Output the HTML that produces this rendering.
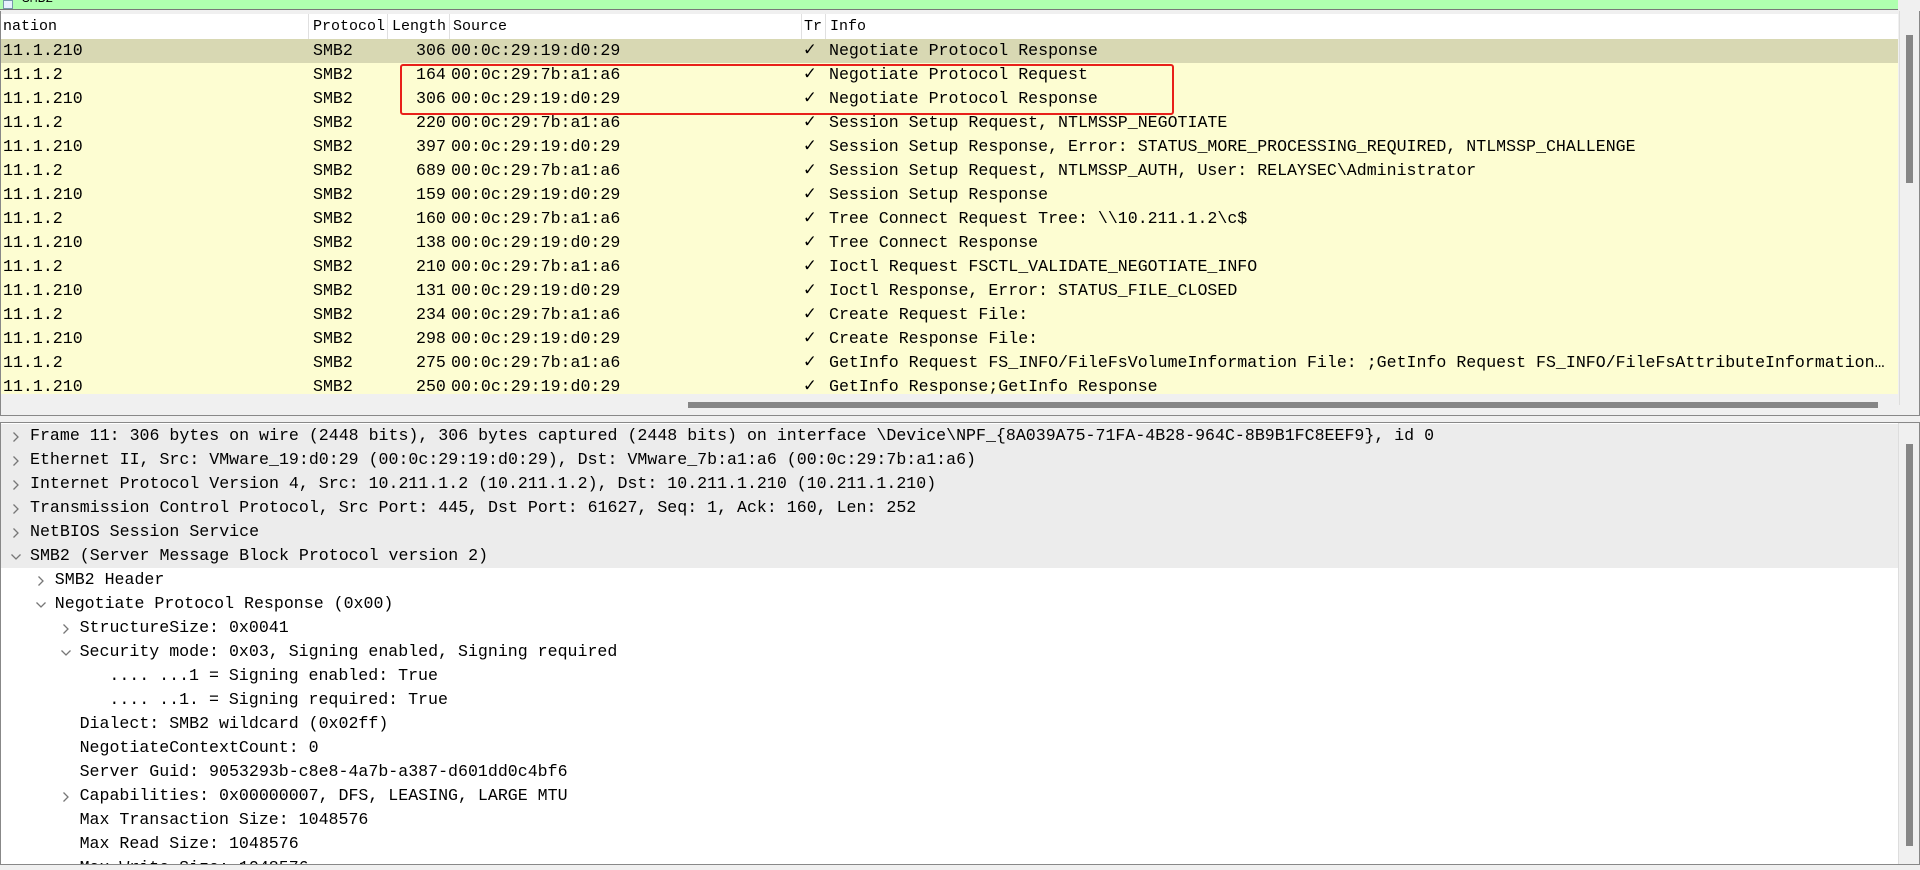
<!DOCTYPE html>
<html><head><meta charset="utf-8"><style>
*{margin:0;padding:0;box-sizing:border-box}
body{width:1920px;height:870px;overflow:hidden;background:#f0f0f0;font-family:"Liberation Mono",monospace;font-size:16.6px;color:#000;position:relative}
.filter{position:absolute;left:0;top:0;width:1898px;height:10px;background:#afffaf;border-bottom:1px solid #777}
.list{position:absolute;left:0;top:11px;width:1920px;height:405px;border:1px solid #888;border-top:none;background:#f0f0f0;overflow:hidden}
.hdr{position:absolute;left:0;top:3px;width:1897px;height:25px;background:#fff}
.c{position:absolute;white-space:pre;font-size:15px;top:4px}
.sep{position:absolute;top:3px;width:1px;height:25px;background:#e0e0e0}
.row{position:absolute;left:0;width:1897px;height:24px;background:#fdfdd2}
.row.sel{background:#d8d8b3}
.row span{position:absolute;top:2px;white-space:pre}
.box{position:absolute;left:399px;top:53px;width:774px;height:51px;border:2.5px solid #e8201a;border-radius:3px}
.det{position:absolute;left:0;top:422px;width:1920px;height:443px;border:1px solid #888;background:#fff;overflow:hidden}
.dr{position:absolute;left:0;height:24px;width:1897px;white-space:pre}
.dr.g{background:#ececec}
.dr svg{position:absolute;top:7px}
.dr .t{position:absolute;top:2px}
</style></head><body>
<div class="filter"><div style="position:absolute;left:3px;top:0;width:10px;height:9px;background:#e8f0ff;border:1px solid #79a"></div><span style="position:absolute;left:22px;top:-9px;font-size:13px">SMB2</span></div>
<div class="list">
<div class="hdr">
<span class="c" style="left:2px">nation</span>
<span class="c" style="left:312px">Protocol</span>
<span class="c" style="left:391px">Length</span>
<span class="c" style="left:452px">Source</span>
<span class="c" style="left:803px">Tr</span>
<span class="c" style="left:829px">Info</span>
</div>
<div class="sep" style="left:307px"></div><div class="sep" style="left:386px"></div><div class="sep" style="left:448px"></div><div class="sep" style="left:800px"></div><div class="sep" style="left:824px"></div>
<div id="rows"></div>
<div class="box"></div>
<div style="position:absolute;left:0;top:383px;width:1897px;height:22px;background:#f0f0f0"></div>
<div style="position:absolute;left:687px;top:391px;width:1190px;height:6px;background:#868686"></div>
<div style="position:absolute;left:1898px;top:0;width:1px;height:394px;background:#ddd"></div>
<div style="position:absolute;left:1905px;top:24px;width:7px;height:148px;background:#868686"></div>
</div>
<div class="det" id="det">
<div style="position:absolute;left:1897px;top:0;width:22px;height:443px;background:#f0f0f0;border-left:1px solid #ddd"></div>
<div style="position:absolute;left:1905px;top:21px;width:7px;height:402px;background:#868686"></div>
</div>
<script>
var R=[["11.1.210","306","00:0c:29:19:d0:29","Negotiate Protocol Response"],
["11.1.2","164","00:0c:29:7b:a1:a6","Negotiate Protocol Request"],
["11.1.210","306","00:0c:29:19:d0:29","Negotiate Protocol Response"],
["11.1.2","220","00:0c:29:7b:a1:a6","Session Setup Request, NTLMSSP_NEGOTIATE"],
["11.1.210","397","00:0c:29:19:d0:29","Session Setup Response, Error: STATUS_MORE_PROCESSING_REQUIRED, NTLMSSP_CHALLENGE"],
["11.1.2","689","00:0c:29:7b:a1:a6","Session Setup Request, NTLMSSP_AUTH, User: RELAYSEC\\Administrator"],
["11.1.210","159","00:0c:29:19:d0:29","Session Setup Response"],
["11.1.2","160","00:0c:29:7b:a1:a6","Tree Connect Request Tree: \\\\10.211.1.2\\c$"],
["11.1.210","138","00:0c:29:19:d0:29","Tree Connect Response"],
["11.1.2","210","00:0c:29:7b:a1:a6","Ioctl Request FSCTL_VALIDATE_NEGOTIATE_INFO"],
["11.1.210","131","00:0c:29:19:d0:29","Ioctl Response, Error: STATUS_FILE_CLOSED"],
["11.1.2","234","00:0c:29:7b:a1:a6","Create Request File:"],
["11.1.210","298","00:0c:29:19:d0:29","Create Response File:"],
["11.1.2","275","00:0c:29:7b:a1:a6","GetInfo Request FS_INFO/FileFsVolumeInformation File: ;GetInfo Request FS_INFO/FileFsAttributeInformation…"],
["11.1.210","250","00:0c:29:19:d0:29","GetInfo Response;GetInfo Response"]];
var h="";
for(var i=0;i<R.length;i++){var r=R[i];var y=28+i*24;
h+='<div class="row'+(i==0?' sel':'')+'" style="top:'+y+'px"><span style="left:2px">'+r[0]+'</span><span style="left:312px">SMB2</span><span style="left:415px">'+r[1]+'</span><span style="left:450px">'+r[2]+'</span><span style="left:803px;font-size:19px;top:-1px">✓</span><span style="left:828px">'+r[3]+'</span></div>';}
document.getElementById('rows').innerHTML=h;
var D=[[0,">", "Frame 11: 306 bytes on wire (2448 bits), 306 bytes captured (2448 bits) on interface \\Device\\NPF_{8A039A75-71FA-4B28-964C-8B9B1FC8EEF9}, id 0",1],
[0,">","Ethernet II, Src: VMware_19:d0:29 (00:0c:29:19:d0:29), Dst: VMware_7b:a1:a6 (00:0c:29:7b:a1:a6)",1],
[0,">","Internet Protocol Version 4, Src: 10.211.1.2 (10.211.1.2), Dst: 10.211.1.210 (10.211.1.210)",1],
[0,">","Transmission Control Protocol, Src Port: 445, Dst Port: 61627, Seq: 1, Ack: 160, Len: 252",1],
[0,">","NetBIOS Session Service",1],
[0,"v","SMB2 (Server Message Block Protocol version 2)",1],
[1,">","SMB2 Header",0],
[1,"v","Negotiate Protocol Response (0x00)",0],
[2,">","StructureSize: 0x0041",0],
[2,"v","Security mode: 0x03, Signing enabled, Signing required",0],
[3.2,"",".... ...1 = Signing enabled: True",0],
[3.2,"",".... ..1. = Signing required: True",0],
[2,"","Dialect: SMB2 wildcard (0x02ff)",0],
[2,"","NegotiateContextCount: 0",0],
[2,"","Server Guid: 9053293b-c8e8-4a7b-a387-d601dd0c4bf6",0],
[2,">","Capabilities: 0x00000007, DFS, LEASING, LARGE MTU",0],
[2,"","Max Transaction Size: 1048576",0],
[2,"","Max Read Size: 1048576",0],
[2,"","Max Write Size: 1048576",0]];
h="";
for(var i=0;i<D.length;i++){var d=D[i];var x=29+d[0]*24.8;var y=1+i*24;
var a="";
if(d[1]==">")a='<svg width="8" height="12" style="left:'+(x-18)+'px"><path d="M1.5 1.5L6 6L1.5 10.5" fill="none" stroke="#777" stroke-width="1.3"/></svg>';
if(d[1]=="v")a='<svg width="12" height="8" style="left:'+(x-20)+'px;top:9px"><path d="M1.5 1.5L6 6L10.5 1.5" fill="none" stroke="#777" stroke-width="1.3"/></svg>';
h+='<div class="dr'+(d[3]?' g':'')+'" style="top:'+y+'px">'+a+'<span class="t" style="left:'+x+'px">'+d[2]+'</span></div>';}
document.getElementById('det').insertAdjacentHTML('afterbegin',h);
</script>
</body></html>
